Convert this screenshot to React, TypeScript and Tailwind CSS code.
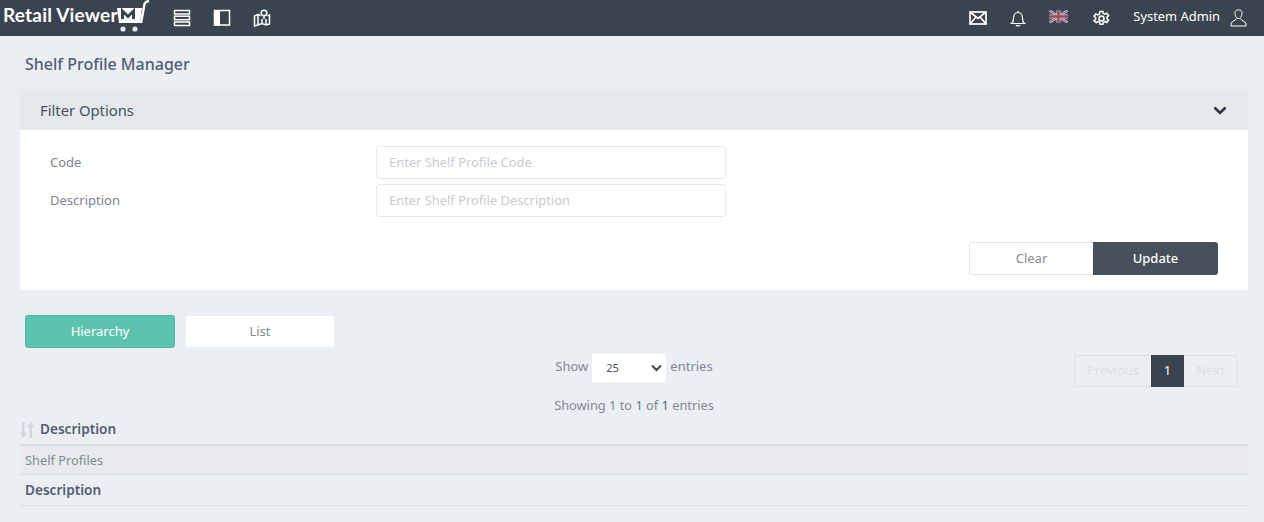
import React from "react";

const Logo = () => (
  <div className="flex items-center relative w-[150px] h-[36px] shrink-0">
    <span className="text-white text-[19px] font-bold tracking-[0.2px] leading-none ml-[3px] mt-[-7px] whitespace-nowrap [font-family:Lato,sans-serif]">Retail Viewer</span>
    <svg className="absolute left-[116px] top-0" width="34" height="34" viewBox="0 0 34 34">
      <path d="M1 8h25l-2 15H3z" fill="#fff" />
      <path d="M6.500 19v-8l5.500 5.500L17.500 11v8" fill="none" stroke="#3a444f" strokeWidth="3" />
      <path d="M25 23L28.500 4c.4-1.500 1.500-2.500 4.500-3" fill="none" stroke="#fff" strokeWidth="2.400" />
      <circle cx="7" cy="29" r="2.600" fill="#e8eaee" />
      <circle cx="19" cy="29" r="2.600" fill="#e8eaee" />
    </svg>
  </div>
);

const Nav = ({ children }: { children: React.ReactNode }) => (
  <svg width="20" height="20" viewBox="0 0 20 20" fill="none" stroke="#fff" strokeWidth="1.500">
    {children}
  </svg>
);

const Flag = () => (
  <svg width="19" height="13" viewBox="0 0 60 40" className="opacity-70">
    <rect width="60" height="40" fill="#3b4a86" />
    <path d="M0 0L60 40M60 0L0 40" stroke="#fff" strokeWidth="8" />
    <path d="M0 0L60 40M60 0L0 40" stroke="#c9485b" strokeWidth="3" />
    <path d="M30 0V40M0 20H60" stroke="#fff" strokeWidth="13" />
    <path d="M30 0V40M0 20H60" stroke="#c9485b" strokeWidth="8" />
  </svg>
);

const Header = () => (
  <header className="h-[36px] bg-[#3a444f] flex items-center">
    <Logo />
    <div className="flex items-center gap-[20px] ml-[22px]">
      <Nav>
        <rect x="2.500" y="2.500" width="15" height="3.500" />
        <rect x="2.500" y="8.200" width="15" height="3.500" />
        <rect x="2.500" y="14" width="15" height="3.500" />
      </Nav>
      <Nav>
        <rect x="2.500" y="2.500" width="15" height="14.500" />
        <rect x="2" y="2" width="6" height="15.500" fill="#fff" stroke="none" />
      </Nav>
      <Nav>
        <path d="M2.500 8l3.500-1.500v10.500l-3.500 1zM6 6.500l2.500 1M6 17l4-1.500 4 1.500 3.500-1V7l-2 .8" />
        <path d="M10 15.500V11M14 16.500V11" />
        <circle cx="12" cy="5" r="2.800" />
        <path d="M12 7.800V11" />
      </Nav>
    </div>
    <div className="flex-1" />
    <div className="flex items-center text-white">
      <svg width="18" height="14" viewBox="0 0 18 14" fill="none" stroke="#fff" strokeWidth="1.700">
        <rect x="1" y="1" width="16" height="12" />
        <path d="M1 1l8 6.500L17 1M1 13l5.500-6.500M17 13l-5.500-6.500" />
      </svg>
      <svg className="ml-[23px]" width="16" height="17" viewBox="0 0 16 17" fill="none" stroke="#fff" strokeWidth="1.200">
        <path d="M1.500 13.500c1.500-1 2-2.500 2-5.500 0-3 1.800-5.500 4.500-5.500s4.500 2.500 4.500 5.500c0 3 .5 4.500 2 5.500z" />
        <path d="M8 1v1.500M6 15c.5 1.200 3.500 1.200 4 0" />
      </svg>
      <div className="ml-[23px] mt-[-3px] flex"><Flag /></div>
      <svg className="ml-[25px]" width="17" height="17" viewBox="0 0 24 24" fill="none" stroke="#fff" strokeWidth="2.200">
        <path d="M10 2h4l.6 3 2.200 1 2.700-1.500 2.500 3.500-2.200 2v2.200l2.200 2-2.500 3.500-2.700-1.500-2.200 1-.6 3h-4l-.6-3-2.200-1-2.700 1.500L1.500 15l2.200-2v-2.200l-2.200-2L4 5.500 6.700 7l2.200-1z" />
        <circle cx="12" cy="12" r="3.500" />
      </svg>
      <span className="ml-[23px] mt-[-2px] text-[12.900px] whitespace-nowrap">System Admin</span>
      <svg className="ml-[10px] mr-[17px]" width="17" height="18" viewBox="0 0 17 18" fill="none" stroke="#fff" strokeWidth="1">
        <path d="M5 3.500c0-3.500 7-3.500 7 0 0 3-1 6-3.500 6S5 6.500 5 3.500z" />
        <path d="M6.500 9.500c0 2-5.500 2.500-5.500 5.500v2h15v-2c0-3-5.500-3.500-5.500-5.500" />
      </svg>
    </div>
  </header>
);

const Field = ({ label, placeholder }: { label: string; placeholder: string }) => (
  <div className="flex items-center h-[33px]">
    <label className="w-[326px] text-[13px] text-[#7a838e]">{label}</label>
    <input
      readOnly
      placeholder={placeholder}
      className="w-[350px] h-[33px] pl-[12px] pr-[13px] pb-[2px] border border-[#e6e9ed] rounded-[3px] text-[12.900px] bg-white placeholder:text-[#c8ccd0] outline-none"
    />
  </div>
);

const FilterCard = () => (
  <section className="ml-[20px] mr-[16px] mt-[12px] h-[201px] bg-white rounded-[3px] flex flex-col">
    <div className="h-[41px] pt-[2px] bg-[#e5e9ec] flex items-center justify-between pl-[20px] pr-[21px] rounded-t-[3px]">
      <span className="text-[14.800px] text-[#47525e]">Filter Options</span>
      <svg width="14" height="9" viewBox="0 0 14 9" fill="none" stroke="#2f3640" strokeWidth="2.600">
        <path d="M1.500 1.500L7 7l5.500-5.500" />
      </svg>
    </div>
    <div className="flex flex-col gap-[5px] pl-[30px] pt-[16px]">
      <Field label="Code" placeholder="Enter Shelf Profile Code" />
      <Field label="Description" placeholder="Enter Shelf Profile Description" />
    </div>
    <div className="flex justify-end pr-[30px] mt-[25px]">
      <button className="w-[124px] h-[33px] border border-[#e6e9ed] border-r-0 rounded-l-[3px] bg-white text-[13px] text-[#838c96]">Clear</button>
      <button className="w-[125px] h-[33px] rounded-r-[3px] bg-[#464f5a] text-[13px] font-medium text-white">Update</button>
    </div>
  </section>
);

const Tabs = () => (
  <div className="flex items-center gap-[11px] ml-[25px] mt-[25px]">
    <button className="w-[150px] h-[33px] bg-[#5cc4ae] border border-[#52b5a0] rounded-[3px] text-[13px] text-white">Hierarchy</button>
    <button className="w-[148px] h-[31px] bg-white rounded-[3px] text-[13px] text-[#838c96]">List</button>
  </div>
);

const Controls = () => (
  <div className="grid grid-cols-[1fr_auto_1fr] ml-[20px] mr-[16px] mt-[6px]">
    <div />
    <div className="flex flex-col items-center">
      <div className="flex items-center h-[28px] text-[13px] text-[#838c96]">
        <span className="mt-[-2px]">Show</span>
        <div className="ml-[4px] w-[74px] h-[28px] bg-white rounded-[3px] flex items-center justify-between pl-[14px] pr-[4px]">
          <span className="text-[11px] text-[#47525e]">25</span>
          <svg width="11" height="8" viewBox="0 0 11 8" fill="none" stroke="#3a444f" strokeWidth="2">
            <path d="M1 1.500l4.500 4.500L10 1.500" />
          </svg>
        </div>
        <span className="ml-[4px] mt-[-2px]">entries</span>
      </div>
      <div className="mt-[14px] text-[12.800px] leading-[18px] text-[#838c96]">
        Showing 1 to <span className="text-[#6a7a8c]">1</span> of <span className="text-[#4f6a86]">1</span> entries
      </div>
    </div>
    <div className="flex justify-end pr-[10px] pt-[1px]">
      <div className="flex items-stretch h-[32px] text-[13px] text-[#dcdfe3]">
        <span className="w-[77px] border border-r-0 border-[#dde0e4] rounded-l-[3px] flex items-center justify-center">Previous</span>
        <span className="w-[33px] bg-[#3a444f] text-white flex items-center justify-center">1</span>
        <span className="w-[54px] border border-l-0 border-[#dde0e4] rounded-r-[3px] flex items-center justify-center">Next</span>
      </div>
    </div>
  </div>
);

const Table = () => (
  <div className="ml-[20px] mr-[16px]">
    <div className="h-[32px] pt-[1px] flex items-center border-b-2 border-[#dcdfe4]">
      <svg width="14" height="16" viewBox="0 0 14 16" fill="#d0d6de">
        <path d="M2 0h2.500v10.500H7L3.250 16 0 10.500h2zM9.500 16H12V5.500h2L10.750 0 7 5.500h2.500z" />
      </svg>
      <span className="ml-[6px] text-[13.600px] font-semibold text-[#525e75]">Description</span>
    </div>
    <div className="h-[29px] pt-[1px] flex items-center pl-[5px] bg-[#e8eaee] border-b border-[#dcdfe4] text-[12.800px] text-[#838c96]">Shelf Profiles</div>
    <div className="h-[31px] flex items-center pl-[5px] border-b border-[#dcdfe4] text-[13.600px] font-semibold text-[#525e75]">Description</div>
  </div>
);

export default function App() {
  return (
    <div className="h-[522px] overflow-hidden bg-[#ebeef3] [font-family:'Noto_Sans','Open_Sans',sans-serif]">
      <Header />
      <h1 className="ml-[25px] mt-[16px] h-[25px] leading-[25px] text-[16px] font-medium text-[#525e75]">Shelf Profile Manager</h1>
      <FilterCard />
      <Tabs />
      <Controls />
      <Table />
    </div>
  );
}
